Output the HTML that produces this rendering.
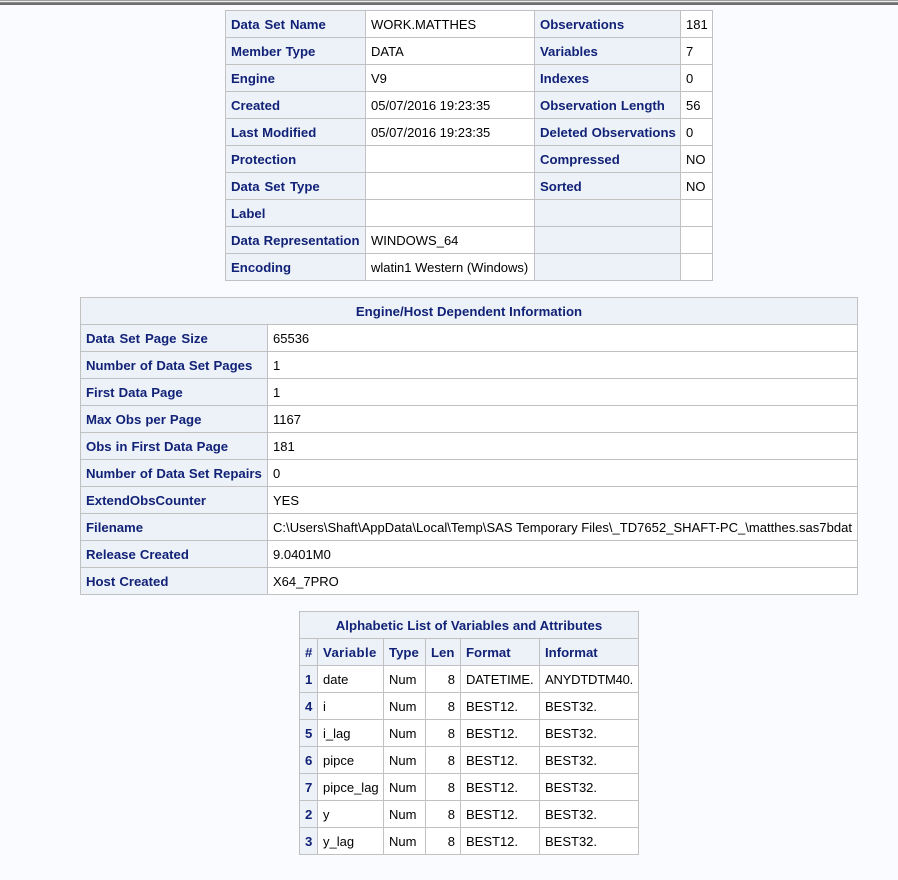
<!DOCTYPE html>
<html><head><meta charset="utf-8"><title>SAS Output</title>
<style>
html,body{margin:0;padding:0;width:898px;height:880px;overflow:hidden;background:#fafbfe}
#r{position:absolute;left:0;top:0;width:898px;height:5px;background:linear-gradient(#a0a0a0 0,#a0a0a0 1px,#e8e8e8 1px,#e8e8e8 2px,#8f8f8f 2px,#8f8f8f 3px,#6e6e6e 3px,#6e6e6e 5px)}
table{position:absolute;border-collapse:collapse;table-layout:fixed;font:13px "Liberation Sans",Arial,sans-serif;color:#000;background:#fff}
td,th{box-sizing:border-box;height:27px;padding:0 5px;border:1px solid #c1c1c1;white-space:nowrap;overflow:hidden;text-align:left;font-weight:normal;background:#fff}
th{background:#edf2f9;color:#112277;font-weight:bold;font-size:13.18px;word-spacing:.4px}
th.c{text-align:center;word-spacing:0;letter-spacing:.05px}
td.n{text-align:right}
th.m{text-align:center}
th.d{word-spacing:1.3px}
</style></head><body>
<div id="r"></div>

<table style="left:225px;top:10px;width:488px">
<colgroup><col style="width:140px"><col style="width:169px"><col style="width:146px"><col style="width:32px"></colgroup>
<tr><th class="d">Data Set Name</th><td>WORK.MATTHES</td><th>Observations</th><td>181</td></tr>
<tr><th>Member Type</th><td>DATA</td><th>Variables</th><td>7</td></tr>
<tr><th>Engine</th><td>V9</td><th>Indexes</th><td>0</td></tr>
<tr><th>Created</th><td>05/07/2016 19:23:35</td><th>Observation Length</th><td>56</td></tr>
<tr><th>Last Modified</th><td>05/07/2016 19:23:35</td><th>Deleted Observations</th><td>0</td></tr>
<tr><th>Protection</th><td></td><th>Compressed</th><td>NO</td></tr>
<tr><th class="d">Data Set Type</th><td></td><th>Sorted</th><td>NO</td></tr>
<tr><th>Label</th><td></td><th></th><td></td></tr>
<tr><th>Data Representation</th><td>WINDOWS_64</td><th></th><td></td></tr>
<tr><th>Encoding</th><td>wlatin1 Western (Windows)</td><th></th><td></td></tr>
</table>

<table style="left:80px;top:297px;width:778px">
<colgroup><col style="width:187px"><col style="width:590px"></colgroup>
<tr><th colspan="2" class="c">Engine/Host Dependent Information</th></tr>
<tr><th class="d">Data Set Page Size</th><td>65536</td></tr>
<tr><th>Number of Data Set Pages</th><td>1</td></tr>
<tr><th>First Data Page</th><td>1</td></tr>
<tr><th>Max Obs per Page</th><td>1167</td></tr>
<tr><th>Obs in First Data Page</th><td>181</td></tr>
<tr><th>Number of Data Set Repairs</th><td>0</td></tr>
<tr><th>ExtendObsCounter</th><td>YES</td></tr>
<tr><th>Filename</th><td style="letter-spacing:.03px">C:\Users\Shaft\AppData\Local\Temp\SAS Temporary Files\_TD7652_SHAFT-PC_\matthes.sas7bdat</td></tr>
<tr><th>Release Created</th><td>9.0401M0</td></tr>
<tr><th>Host Created</th><td>X64_7PRO</td></tr>
</table>

<table style="left:299px;top:611px;width:340px">
<colgroup><col style="width:18px"><col style="width:66px"><col style="width:42px"><col style="width:35px"><col style="width:79px"><col style="width:99px"></colgroup>
<tr><th colspan="6" class="c">Alphabetic List of Variables and Attributes</th></tr>
<tr><th class="m">#</th><th style="letter-spacing:.4px">Variable</th><th>Type</th><th>Len</th><th>Format</th><th>Informat</th></tr>
<tr><th class="m">1</th><td>date</td><td>Num</td><td class="n">8</td><td style="letter-spacing:-.1px">DATETIME.</td><td style="letter-spacing:-.2px">ANYDTDTM40.</td></tr>
<tr><th class="m">4</th><td>i</td><td>Num</td><td class="n">8</td><td>BEST12.</td><td>BEST32.</td></tr>
<tr><th class="m">5</th><td>i_lag</td><td>Num</td><td class="n">8</td><td>BEST12.</td><td>BEST32.</td></tr>
<tr><th class="m">6</th><td>pipce</td><td>Num</td><td class="n">8</td><td>BEST12.</td><td>BEST32.</td></tr>
<tr><th class="m">7</th><td>pipce_lag</td><td>Num</td><td class="n">8</td><td>BEST12.</td><td>BEST32.</td></tr>
<tr><th class="m">2</th><td>y</td><td>Num</td><td class="n">8</td><td>BEST12.</td><td>BEST32.</td></tr>
<tr><th class="m">3</th><td>y_lag</td><td>Num</td><td class="n">8</td><td>BEST12.</td><td>BEST32.</td></tr>
</table>
</body></html>
